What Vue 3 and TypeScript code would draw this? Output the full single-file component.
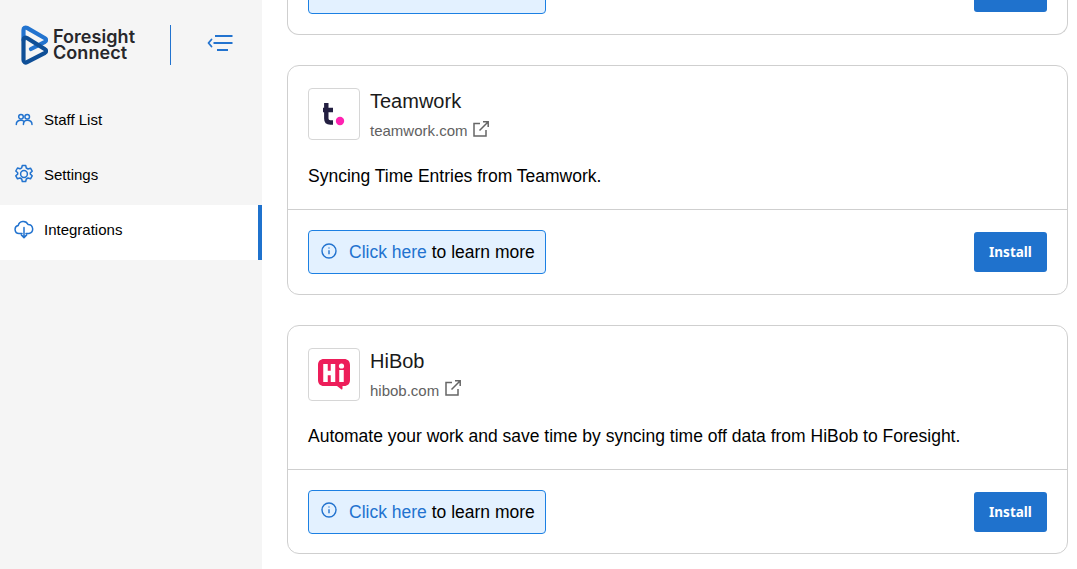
<script setup lang="ts">
interface Integration {
  name: string
  domain: string
  description: string
  logo: 'teamwork' | 'hibob'
}

const navItems = [
  { label: 'Staff List', icon: 'users', active: false },
  { label: 'Settings', icon: 'gear', active: false },
  { label: 'Integrations', icon: 'cloud', active: true },
]

const integrations: Integration[] = [
  {
    name: 'Teamwork',
    domain: 'teamwork.com',
    description: 'Syncing Time Entries from Teamwork.',
    logo: 'teamwork',
  },
  {
    name: 'HiBob',
    domain: 'hibob.com',
    description: 'Automate your work and save time by syncing time off data from HiBob to Foresight.',
    logo: 'hibob',
  },
]
</script>

<template>
  <div class="app">
    <aside class="sidebar">
      <header class="brand">
        <svg class="brand-mark" viewBox="0 0 28 40" fill="none" stroke-width="4.2" stroke-linejoin="round" stroke-linecap="round">
          <path d="M3.500 15V5c0-2 1.800-3 3.500-2.100l18 10.300c1.400.8 1.400 2.800 0 3.600L11 24" stroke="#2273cf" />
          <path d="M3.500 15c0-1.900 1.800-2.900 3.500-2L25 24.200c1.400.8 1.400 2.800 0 3.600L7 37.200c-1.700.9-3.500-.1-3.500-2.100V15Z" stroke="#0f4f97" />
        </svg>
        <div class="brand-name"><span>Foresight</span><span>Connect</span></div>
        <span class="brand-rule"></span>
        <svg class="collapse" viewBox="0 0 26 16" fill="none" stroke="#2273cf" stroke-width="2">
          <path d="M4.500 4.500 1.500 8l3 3.500" stroke-linecap="round" stroke-linejoin="round" stroke-width="1.800" />
          <path d="M8 1h17.500M6.500 8h19M10 15h11" />
        </svg>
      </header>

      <nav class="nav">
        <a v-for="item in navItems" :key="item.label" class="nav-item" :class="{ active: item.active }">
          <svg class="nav-icon" viewBox="0 0 20 20" fill="none" stroke="#2273cf" stroke-width="1.500" stroke-linecap="round" stroke-linejoin="round">
            <template v-if="item.icon === 'users'">
              <circle cx="7" cy="7.700" r="2.300" />
              <circle cx="13.200" cy="7.700" r="2.300" />
              <path d="M2.300 15.500c0-2.600 1.900-4.300 4.700-4.300 1.500 0 2.500.5 3.200 1.300M18 15.500c0-2.600-1.900-4.300-4.800-4.300-1.500 0-2.400.5-3 1.300-.5.800-.8 1.800-.8 3" />
            </template>
            <template v-else-if="item.icon === 'gear'">
              <circle cx="10" cy="10" r="3.400" />
              <path d="M8.300 1.500h3.400l.6 2.500 1.700 1 2.500-.8 1.700 3-1.900 1.700v1.200l1.900 1.700-1.700 3-2.500-.8-1.700 1-.6 2.500H8.300l-.6-2.500-1.700-1-2.500.8-1.700-3 1.900-1.700V8.700L1.800 7l1.700-3 2.500.8 1.700-1z" />
            </template>
            <template v-else>
              <path d="M8 14.500H5a4 4 0 0 1-.8-7.900A5.200 5.200 0 0 1 14 5.400a4.600 4.600 0 0 1 1 9.100h-3" />
              <path d="M10 8.500v10M7.300 15.900l2.700 2.700 2.700-2.700" />
            </template>
          </svg>
          <span>{{ item.label }}</span>
        </a>
      </nav>
    </aside>

    <main class="main">
      <section class="card card-tail">
        <div class="callout">
          <svg class="info" viewBox="0 0 16 16" fill="none" stroke="#2273cf" stroke-width="1.400"><circle cx="8" cy="8" r="7" /><path d="M8 7.200v4M8 4.400v1.200" /></svg>
          <span class="callout-text"><a class="link">Click here</a> to learn more</span>
        </div>
        <button class="install" type="button">Install</button>
      </section>

      <section v-for="item in integrations" :key="item.name" class="card">
        <div class="card-body">
          <div class="head">
            <div class="logo" :class="'logo-' + item.logo">
              <svg v-if="item.logo === 'teamwork'" class="logo-art" viewBox="0 0 50 50">
                <path d="M17.300 14v15.500c0 3 1.700 4 4 4h2.700M14 21h10" fill="none" stroke="#231f41" stroke-width="4.400" />
                <circle cx="31" cy="32" r="4.200" fill="#ff22b1" />
              </svg>
              <svg v-else class="logo-art" viewBox="0 0 50 51">
                <path d="M15 10h20c3.800 0 6 2.200 6 6v15c0 3.800-2.200 6-6 6h-1.500v2.500c0 .8-.7 1.100-1.300.7L28 37H15c-3.800 0-6-2.200-6-6V16c0-3.800 2.200-6 6-6Z" fill="#ed1e5a" />
                <path d="M16.500 15v18M24 15v18M16.500 24H24M32.500 21v12" fill="none" stroke="#fff" stroke-width="4.500" />
                <circle cx="32.500" cy="17" r="2.600" fill="#fff" />
              </svg>
            </div>
            <div class="meta">
              <h2 class="name">{{ item.name }}</h2>
              <div class="domain">
                <span>{{ item.domain }}</span>
                <svg class="ext" viewBox="0 0 16 16" fill="none" stroke="#666" stroke-width="1.500">
                  <path d="M7 2.500H1v12.500h12V9" />
                  <path d="M6.500 9.500 15 1M10 .8h5.200V6" />
                </svg>
              </div>
            </div>
          </div>
          <p class="desc">{{ item.description }}</p>
        </div>
        <div class="card-foot">
          <div class="callout">
            <svg class="info" viewBox="0 0 16 16" fill="none" stroke="#2273cf" stroke-width="1.400"><circle cx="8" cy="8" r="7" /><path d="M8 7.200v4M8 4.400v1.200" /></svg>
            <span class="callout-text"><a class="link">Click here</a> to learn more</span>
          </div>
          <button class="install" type="button">Install</button>
        </div>
      </section>
    </main>
  </div>
</template>

<style>
html, body { margin: 0; background: #fff; overflow: hidden; }
</style>

<style scoped>
.app {
  display: flex;
  height: 569px;
  overflow: hidden;
  font-family: "Liberation Sans", Arial, sans-serif;
  color: #000;
}
.sidebar {
  flex: 0 0 262px;
  background: #f5f5f5;
}
.brand {
  display: flex;
  align-items: center;
  height: 95px;
  box-sizing: border-box;
  padding: 0 0 5px 20px;
}
.brand-mark { width: 28px; height: 40px; flex: none; }
.brand-name {
  width: 117px;
  padding-left: 5px;
  box-sizing: border-box;
  font-family: Inter, sans-serif;
  font-weight: 600;
  font-size: 18px;
  letter-spacing: 0.050px;
  color: #27272b;
}
.brand-name span { display: block; line-height: 16px; height: 16px; }
.brand-rule { width: 1.500px; height: 40px; background: #2273cf; flex: none; margin-left: 4.500px; }
.collapse { width: 26px; height: 16px; margin: 0 0 4px 35.500px; flex: none; }
.nav { display: flex; flex-direction: column; }
.nav-item {
  display: flex;
  align-items: center;
  gap: 10px;
  height: 55px;
  box-sizing: border-box;
  padding: 0 0 7px 14px;
  font-size: 15px;
  color: #000;
}
.nav-item.active {
  background: #fff;
  border-right: 4px solid #1f72cd;
}
.nav-icon { width: 20px; height: 20px; flex: none; }
.main {
  flex: 1;
  min-width: 0;
  padding: 0 9px 0 25px;
  display: flex;
  flex-direction: column;
  gap: 30px;
}
.card {
  flex: none;
  background: #fff;
  border: 1px solid #cfcfcf;
  border-radius: 12px;
}
.card-tail {
  height: 35px;
  box-sizing: border-box;
  border-top: 0;
  border-top-left-radius: 0;
  border-top-right-radius: 0;
  overflow: hidden;
  display: flex;
  justify-content: space-between;
  align-items: flex-end;
  padding: 0 20px 20px;
}
.card-tail .callout { flex: none; }
.card-tail .install { flex: none; margin: 0 0 2px; }
.card-body { padding: 22px 20px 0; height: 144px; box-sizing: border-box; border-bottom: 1px solid #cfcfcf; }
.head { display: flex; gap: 10px; }
.logo {
  width: 52px;
  height: 52px;
  box-sizing: border-box;
  border: 1px solid #d6d6d6;
  border-radius: 4px;
  flex: none;
}
.logo-hibob { height: 53px; }
.logo-art { display: block; width: 100%; height: 100%; }
.meta { height: 52px; }
.name { margin: 0; font-weight: 400; font-size: 20px; line-height: 26px; color: #1a1a1a; }
.domain {
  display: flex;
  align-items: center;
  gap: 5.500px;
  margin-top: 8px;
  font-size: 15px;
  line-height: 18px;
  color: #616161;
}
.ext { width: 16px; height: 16px; margin-top: -5px; }
.desc { margin: 24.500px 0 0; font-size: 17.500px; line-height: 23px; }
.card-foot {
  display: flex;
  justify-content: space-between;
  align-items: flex-start;
  height: 83.600px;
  box-sizing: border-box;
  padding: 20px 20px 0;
}
.callout {
  display: flex;
  align-items: center;
  gap: 12px;
  width: 238px;
  height: 44px;
  box-sizing: border-box;
  padding: 0 10px 0 12px;
  background: #e3f1ff;
  border: 1px solid #1c80e3;
  border-radius: 4px;
  white-space: nowrap;
}
.info { width: 16px; height: 16px; flex: none; margin-top: -3px; }
.callout-text { font-size: 17.500px; line-height: 22px; }
.link { color: #2273cf; }
.install {
  width: 73px;
  height: 40px;
  margin-top: 2px;
  border: 0;
  border-radius: 3px;
  background: #1f72cd;
  color: #fff;
  font-family: "Noto Sans", sans-serif;
  font-weight: 700;
  font-size: 13.500px;
  padding: 0;
}
</style>
